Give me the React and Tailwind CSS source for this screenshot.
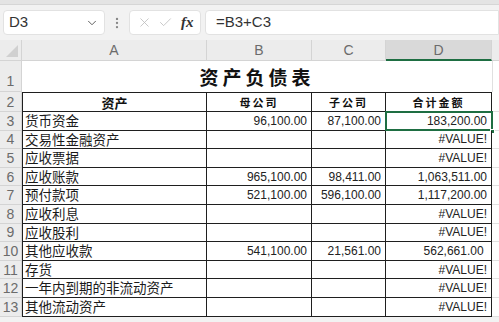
import { ChevronDown, X, Check, EllipsisVertical } from 'lucide-react';

const rows = [
    { n: 3, label: '货币资金', b: '96,100.00', c: '87,100.00', d: '183,200.00' },
    { n: 4, label: '交易性金融资产', b: '', c: '', d: '#VALUE!' },
    { n: 5, label: '应收票据', b: '', c: '', d: '#VALUE!' },
    { n: 6, label: '应收账款', b: '965,100.00', c: '98,411.00', d: '1,063,511.00' },
    { n: 7, label: '预付款项', b: '521,100.00', c: '596,100.00', d: '1,117,200.00' },
    { n: 8, label: '应收利息', b: '', c: '', d: '#VALUE!' },
    { n: 9, label: '应收股利', b: '', c: '', d: '#VALUE!' },
    { n: 10, label: '其他应收款', b: '541,100.00', c: '21,561.00', d: '562,661.00 ' },
    { n: 11, label: '存货', b: '', c: '', d: '#VALUE!' },
    { n: 12, label: '一年内到期的非流动资产', b: '', c: '', d: '#VALUE!' },
    { n: 13, label: '其他流动资产', b: '', c: '', d: '#VALUE!' },
];

const grid = 'grid grid-cols-[22px_185px_105px_74px_106px_1fr] grid-rows-1 leading-none';
const cell = 'border-r-[1.5px] border-b-[1.5px] border-[#1f1f1f] bg-white min-h-0';
const num = 'flex items-center justify-end pr-[4px] text-[12px] text-[#222] font-["Liberation_Sans",sans-serif] whitespace-pre';
const rowHead = 'flex items-center justify-center text-[14px] text-[#6b6b6b] bg-[#ececec] border-r border-b border-[#d4d4d4] font-["Liberation_Sans",sans-serif] min-h-0';

export default function App() {
    return (
        <div className="w-[499px] h-[322px] overflow-hidden bg-[#f2f2f2] font-['Noto_Sans_CJK_SC',sans-serif]">
            <div className="h-[5px] bg-[#e4e4e4] border-b border-[#d6d6d6]" />
            <div className="flex items-center h-[35px] gap-[4px] pl-[3px]">
                <div className="flex items-center justify-between w-[102px] h-[25px] bg-white rounded-[4px] border border-[#e2e2e2] px-[5px]">
                    <span className="text-[15px] text-[#333] font-['Liberation_Sans',sans-serif]">D3</span>
                    <ChevronDown size={14} strokeWidth={1.6} className="text-[#555]" />
                </div>
                <EllipsisVertical size={14} strokeWidth={2} className="text-[#888] mx-[1px]" />
                <div className="flex items-center gap-[6px] w-[72px] h-[25px] bg-white rounded-[4px] border border-[#e2e2e2] pl-[7px]">
                    <X size={15} strokeWidth={1.3} className="text-[#bdbdbd]" />
                    <Check size={15} strokeWidth={1.3} className="text-[#bdbdbd]" />
                    <span className="text-[15px] italic font-bold text-[#333] font-['Liberation_Serif',serif] ml-[2px]">fx</span>
                </div>
                <div className="flex items-center flex-1 h-[25px] bg-white rounded-l-[4px] border border-[#e2e2e2] pl-[10px]">
                    <span className="text-[15px] text-[#333] font-['Liberation_Sans',sans-serif]">=B3+C3</span>
                </div>
            </div>

            <div className={`${grid} h-[21px] text-[14px] text-[#6b6b6b] font-['Liberation_Sans',sans-serif]`}>
                <div className="relative bg-[#ececec] border-r border-b border-[#d4d4d4]">
                    <div className="absolute right-[3px] bottom-[3px] w-0 h-0 border-l-[12px] border-l-transparent border-b-[12px] border-b-[#d0d0d0]" />
                </div>
                <div className="flex items-center justify-center bg-[#ececec] border-r border-b border-[#d4d4d4]">A</div>
                <div className="flex items-center justify-center bg-[#ececec] border-r border-b border-[#d4d4d4]">B</div>
                <div className="flex items-center justify-center bg-[#ececec] border-r border-b border-[#d4d4d4]">C</div>
                <div className="flex items-center justify-center bg-[#d9d9d9] border-r border-[#d4d4d4] border-b-2 border-b-[#1e6e42]">D</div>
                <div className="bg-[#ececec] border-b border-[#d4d4d4]" />
            </div>

            <div className={`${grid} h-[31px]`}>
                <div className={`${rowHead} items-end pb-[3px]`}>1</div>
                <div className="col-span-4 flex items-center justify-center bg-white text-[19px] font-bold tracking-[4px] text-[#111]">资产负债表</div>
                <div className="bg-white border-l border-[#e0e0e0]" />
            </div>

            <div className={`${grid} h-[20px]`}>
                <div className={rowHead}>2</div>
                <div className={`${cell} border-t-[1.5px] border-l-[1.5px] flex items-center justify-center text-[13px] font-bold text-[#111]`}>资产</div>
                <div className={`${cell} border-t-[1.5px] flex items-center justify-center text-[11px] font-bold tracking-[2px] text-[#111]`}>母公司</div>
                <div className={`${cell} border-t-[1.5px] flex items-center justify-center text-[11px] font-bold tracking-[2px] text-[#111]`}>子公司</div>
                <div className={`${cell} border-t-[1.5px] flex items-center justify-center text-[11px] font-bold tracking-[2px] text-[#111]`}>合计金额</div>
                <div className="bg-white border-b border-[#e0e0e0]" />
            </div>

            {rows.map((r) => (
                <div key={r.n} className={`${grid} h-[18.6px]`}>
                    <div className={r.n === 3 ? `${rowHead} bg-[#d6d6d6] text-[#1e6e42]` : rowHead}>{r.n}</div>
                    <div className={`${cell} border-l-[1.5px] flex items-center pl-[2px] text-[13.5px] text-[#1a1a1a] whitespace-nowrap`}>{r.label}</div>
                    <div className={`${cell} ${num}`}>{r.b}</div>
                    <div className={`${cell} ${num}`}>{r.c}</div>
                    <div className={`${cell} ${num} relative ${r.d.startsWith('#') ? 'pr-0' : ''}`}>
                        {r.d}
                        {r.n === 3 && (
                            <>
                                <div className="absolute -inset-[1.5px] border-2 border-[#1e6e42]" />
                                <div className="absolute -right-[4px] -bottom-[4px] w-[5px] h-[5px] bg-[#1e6e42] border border-white" />
                            </>
                        )}
                    </div>
                    <div className="bg-white border-b border-[#e0e0e0]" />
                </div>
            ))}
        </div>
    );
}
